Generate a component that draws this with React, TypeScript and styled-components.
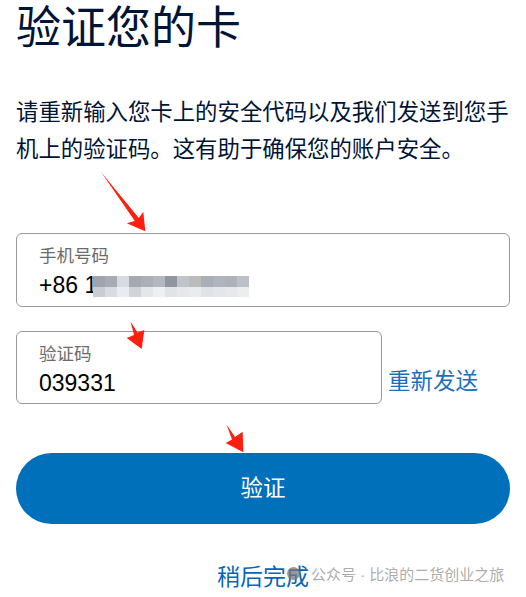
import styled, { createGlobalStyle } from "styled-components"

const FONT = `"Liberation Sans", "Noto Sans CJK SC", sans-serif`

const GlobalStyle = createGlobalStyle`
  html, body {
    margin: 0;
    padding: 0;
    background: #ffffff;
  }
  body {
    font-family: ${FONT};
    color: #001435;
  }
`

const MOSAIC_TOP = ['#a0a5ad', '#a7acb4', '#d6dbe3', '#a4a9b2', '#abb0b8', '#b2b7c0', '#9095a0', '#bfc4cb', '#bcbcbc', '#a9afb8', '#b0b4bc', '#adb2ba', '#bcc1c9']
const MOSAIC_BOTTOM = ['#c9cdd3', '#d8dce1', '#e8ebef', '#d0d4d9', '#e3e6ea', '#eef0f2', '#e0e3e7', '#e6e8ec', '#e9ebed', '#dfe2e6', '#e4e7ea', '#e6e8eb', '#ecedf0']

const Mosaic = () => (
  <MosaicSvg width={156} height={21} viewBox="0 0 156 21">
    {MOSAIC_TOP.map((c, i) => (
      <rect key={`t${i}`} x={i * 12} y={0} width={12} height={11} fill={c} />
    ))}
    {MOSAIC_BOTTOM.map((c, i) => (
      <rect key={`b${i}`} x={i * 12} y={11} width={12} height={10} fill={c} />
    ))}
  </MosaicSvg>
)

const Arrows = () => (
  <ArrowLayer width={526} height={597} viewBox="0 0 526 597">
    <polygon points="101,172 138.8,217.9 143.3,211.7 145.3,231.3 126.7,223.3 134.8,220.9" fill="#ff1f10" />
    <polygon points="130.5,321.5 137.5,332.5 144.3,330 141.7,349 126.7,338 134,335" fill="#ff1f10" />
    <polygon points="226.5,424.5 235,437 242.7,431.7 243.3,452.3 225.7,443 232,439.5" fill="#ff1f10" />
  </ArrowLayer>
)

export default function App() {
  return (
    <>
      <GlobalStyle />
      <Page>
        <Title>验证您的卡</Title>
        <Description>请重新输入您卡上的安全代码以及我们发送到您手机上的验证码。这有助于确保您的账户安全。</Description>

        <Field>
          <Label>手机号码</Label>
          <Value>
            +86 1<Mosaic />
          </Value>
        </Field>

        <CodeRow>
          <Field $width={366}>
            <Label>验证码</Label>
            <Value>039331</Value>
          </Field>
          <Link $size={22.5} $color="#1a6fbf">重新发送</Link>
        </CodeRow>

        <VerifyButton>验证</VerifyButton>

        <Footer>
          <Link $size={23} $color="#0a66b5">稍后完成</Link>
        </Footer>

        <Watermark>
          <WatermarkIcon />
          <span>公众号 · 比浪的二货创业之旅</span>
        </Watermark>
        <Arrows />
      </Page>
    </>
  )
}

const Page = styled.div`
  position: relative;
  width: 526px;
  height: 597px;
  box-sizing: border-box;
  padding: 6px 16px 0;
  display: flex;
  flex-direction: column;
  overflow: hidden;
`

const Title = styled.h1`
  margin: 0;
  font-size: 45px;
  line-height: 45px;
  font-weight: normal;
  color: #001435;
  letter-spacing: 0;
`

const Description = styled.p`
  margin: 44px 0 0;
  font-size: 22.4px;
  line-height: 36.5px;
  color: #001435;
`

const Field = styled.div<{ $width?: number }>`
  box-sizing: border-box;
  width: ${p => (p.$width ? `${p.$width}px` : '100%')};
  height: 74px;
  margin-top: 65px;
  border: 1px solid #9a9a9a;
  border-radius: 6px;
  padding: 11px 22px 0;
  display: flex;
  flex-direction: column;
  gap: 4px;
`

const Label = styled.div`
  font-size: 17.5px;
  line-height: 22px;
  color: #6b6b6b;
`

const Value = styled.div`
  font-size: 23px;
  line-height: 28px;
  color: #000000;
  display: flex;
  align-items: flex-start;
  white-space: pre;
`

const MosaicSvg = styled.svg`
  display: block;
  margin-left: -4px;
  margin-top: 5px;
`

const CodeRow = styled.div`
  display: flex;
  align-items: flex-end;
  gap: 6px;
  margin-top: 24px;

  & > ${Field} {
    margin-top: 0;
    height: 73px;
  }
`

const Link = styled.span<{ $size: number; $color: string }>`
  font-size: ${p => p.$size}px;
  line-height: 28px;
  color: ${p => p.$color};
  padding-bottom: 8px;
`

const VerifyButton = styled.button`
  margin-top: 49px;
  width: 100%;
  height: 71px;
  border: none;
  border-radius: 36px;
  background: #0070ba;
  color: #ffffff;
  font-family: ${FONT};
  font-size: 22.5px;
  line-height: 28px;
  padding: 0;
  cursor: pointer;
`

const Footer = styled.div`
  display: flex;
  justify-content: center;
  margin-top: 39px;

  & > span {
    padding-bottom: 0;
  }
`

const Watermark = styled.div`
  position: absolute;
  left: 287px;
  top: 565px;
  display: flex;
  align-items: center;
  gap: 11px;
  font-size: 15px;
  line-height: 20px;
  color: rgba(150, 150, 150, 0.8);
  text-shadow: 0 0 1px rgba(255, 255, 255, 0.8);
  pointer-events: none;
`

const WatermarkIcon = styled.span`
  width: 13px;
  height: 13px;
  border-radius: 50%;
  background: rgba(120, 120, 120, 0.75);
  margin-top: -4px;
`

const ArrowLayer = styled.svg`
  position: absolute;
  left: 0;
  top: 0;
  pointer-events: none;
`
